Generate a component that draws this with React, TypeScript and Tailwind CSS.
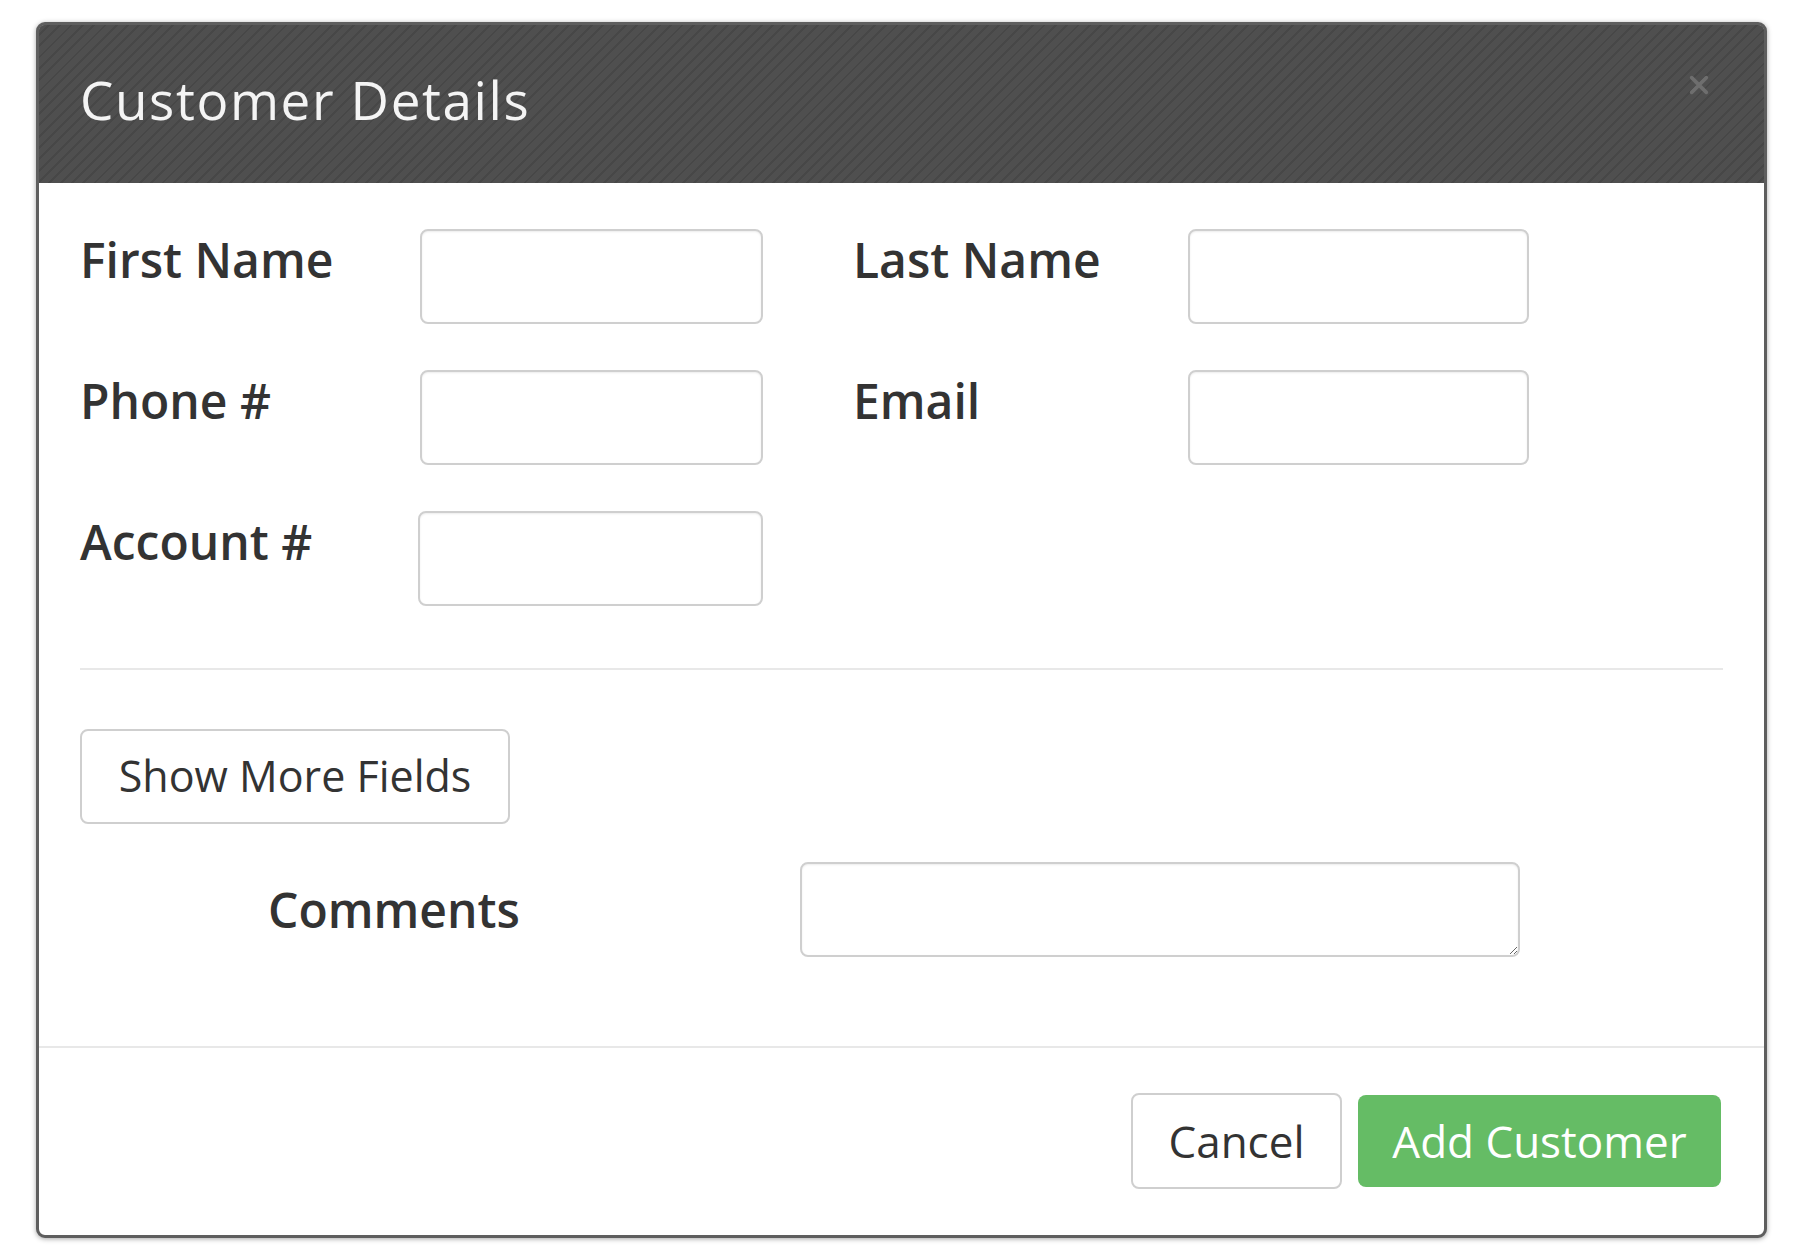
import type { ReactNode } from "react";

const font = { fontFamily: '"Open Sans", "Noto Sans", sans-serif' };

function Label({ children, className = "" }: { children: ReactNode; className?: string }) {
  return (
    <label className={`text-[48px] font-semibold leading-none text-[#333] ${className}`}>
      {children}
    </label>
  );
}

function Field({ className = "" }: { className?: string }) {
  return (
    <input
      type="text"
      className={`h-[95px] rounded-[8px] border-2 border-[#cfcfcf] bg-white shadow-[inset_0_1px_2px_rgba(0,0,0,0.08)] outline-none ${className}`}
    />
  );
}

export default function App() {
  return (
    <div className="min-h-screen bg-white pl-[36px] pt-[22px]" style={font}>
      <div className="w-[1731px] overflow-hidden rounded-[9px] border-[3px] border-[#5e5e5e] bg-white shadow-[0_1px_5px_rgba(0,0,0,0.35)]">
        {/* header */}
        <div className="relative flex h-[158px] items-center bg-[#4d4d4d] bg-[repeating-linear-gradient(135deg,#4f4f4f_0px,#4f4f4f_6px,#474747_6px,#474747_8px)] px-[41px] pb-[10px]">
          <h2 className="text-[53px] font-normal leading-none tracking-[1.6px] text-[#f4f4f4]">Customer Details</h2>
          <button className="absolute right-[54px] top-[49px] h-[22px] w-[22px]" aria-label="Close">
            <svg viewBox="0 0 24 24" className="h-[22px] w-[22px]">
              <path d="M4 4 L20 20 M20 4 L4 20" stroke="#6e6e6e" strokeWidth="4" strokeLinecap="round" />
            </svg>
          </button>
        </div>

        {/* body */}
        <div className="px-[41px] pt-[46px]">
          <div className="flex flex-col gap-[46px]">
            <div className="flex items-start">
              <Label className="w-[340px] pt-[7px]">First Name</Label>
              <Field className="w-[343px]" />
              <Label className="ml-[90px] w-[335px] pt-[7px]">Last Name</Label>
              <Field className="w-[341px]" />
            </div>
            <div className="flex items-start">
              <Label className="w-[340px] pt-[7px]">Phone #</Label>
              <Field className="w-[343px]" />
              <Label className="ml-[90px] w-[335px] pt-[7px]">Email</Label>
              <Field className="w-[341px]" />
            </div>
            <div className="flex items-start">
              <Label className="w-[338px] pt-[7px]">Account #</Label>
              <Field className="w-[345px]" />
            </div>
          </div>

          <hr className="mt-[62px] border-t-2 border-[#e8e8e8]" />

          <button className="mt-[59px] h-[95px] w-[430px] rounded-[8px] border-2 border-[#cfcfcf] bg-white text-[43px] text-[#333]">
            Show More Fields
          </button>

          <div className="mt-[38px] flex items-center pb-[89px]">
            <Label className="w-[720px] pl-[188px]">Comments</Label>
            <textarea className="h-[95px] w-[720px] rounded-[8px] border-2 border-[#cfcfcf] shadow-[inset_0_1px_2px_rgba(0,0,0,0.08)] outline-none" />
          </div>
        </div>

        {/* footer */}
        <div className="flex items-center justify-end gap-[16px] border-t-2 border-[#e8e8e8] px-[43px] pb-[46px] pt-[45px]">
          <button className="h-[96px] w-[211px] rounded-[8px] border-2 border-[#cfcfcf] bg-white text-[44px] text-[#333]">
            Cancel
          </button>
          <button className="h-[92px] w-[363px] rounded-[8px] bg-[#65bc65] text-[44px] text-white">
            Add Customer
          </button>
        </div>
      </div>
    </div>
  );
}
